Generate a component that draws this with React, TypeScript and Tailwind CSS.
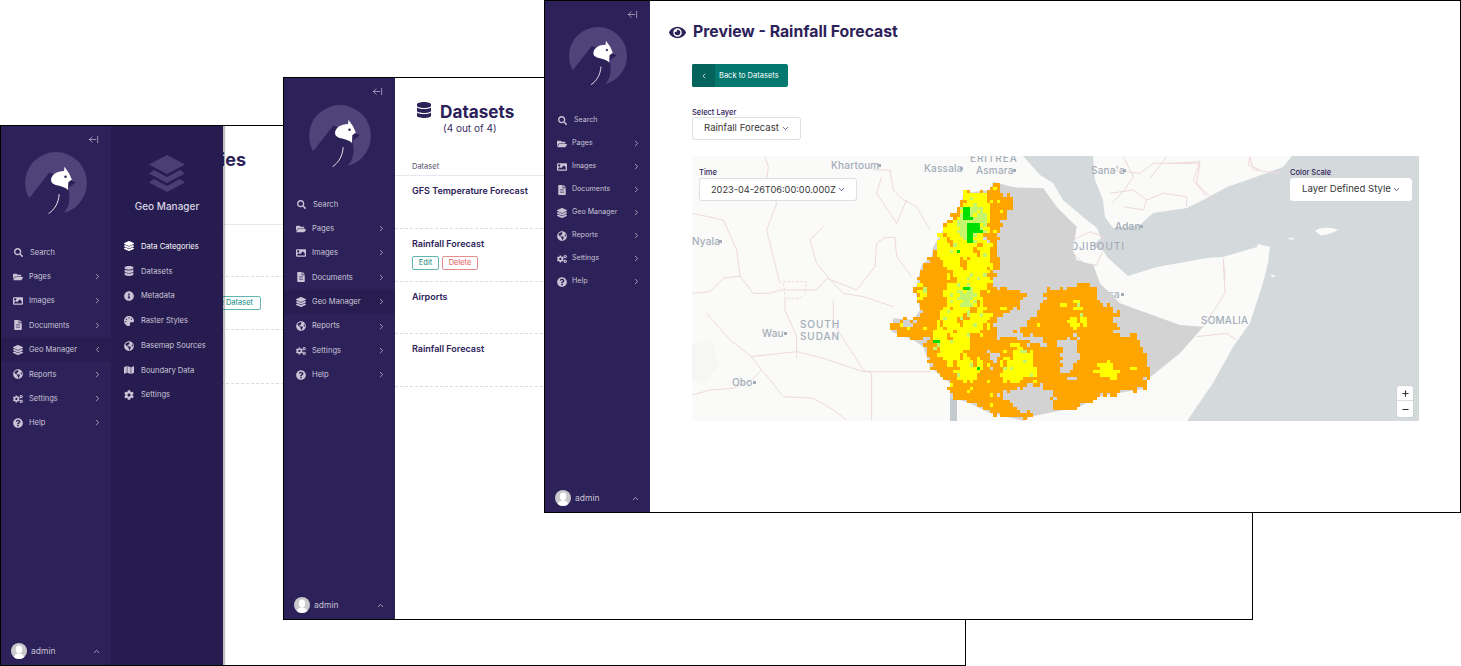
import React from 'react';
import { ArrowLeftFromLine, ChevronDown, ChevronLeft, ChevronRight, ChevronUp, Minus, Plus } from 'lucide-react';
import {
  FaCog,
  FaCogs,
  FaDatabase,
  FaEye,
  FaFileAlt,
  FaFolderOpen,
  FaGlobeAmericas,
  FaImage,
  FaInfoCircle,
  FaLayerGroup,
  FaMap,
  FaPalette,
  FaQuestionCircle,
  FaSearch,
} from 'react-icons/fa';

const navItems = [
  { label: 'Pages', icon: FaFolderOpen },
  { label: 'Images', icon: FaImage },
  { label: 'Documents', icon: FaFileAlt },
  { label: 'Geo Manager', icon: FaLayerGroup },
  { label: 'Reports', icon: FaGlobeAmericas },
  { label: 'Settings', icon: FaCogs },
  { label: 'Help', icon: FaQuestionCircle },
];

const geoItems = [
  { label: 'Data Categories', icon: FaLayerGroup },
  { label: 'Datasets', icon: FaDatabase },
  { label: 'Metadata', icon: FaInfoCircle },
  { label: 'Raster Styles', icon: FaPalette },
  { label: 'Basemap Sources', icon: FaGlobeAmericas },
  { label: 'Boundary Data', icon: FaMap },
  { label: 'Settings', icon: FaCog },
];

function Logo({ size }: { size: number }) {
  return (
    <svg width={size} height={size} viewBox="20 15 182 182">
      <circle cx="111" cy="106" r="88" fill="#50437a" />
      <path d="M34 150 L92 76 L168 104 L146 120 C153 150 150 176 128 196 L60 200 Z" fill="#2d2159" />
      <path d="M97 100 C96 82 114 72 134 72 L135 60 L148 78 L156 96 L146 104 L145 126 C132 110 100 116 97 100 Z" fill="#fff" />
      <circle cx="138" cy="88" r="3.5" fill="#2d2159" />
      <path d="M120 138 C118 165 106 182 90 193" stroke="#fff" strokeWidth="2.5" fill="none" />
    </svg>
  );
}

function Avatar() {
  return (
    <svg width="16" height="16" viewBox="0 0 16 16" className="rounded-full bg-[#c9c8cc] shrink-0">
      <ellipse cx="8" cy="6.5" rx="3.2" ry="4" fill="#fff" />
      <path d="M2.5 16 C3 11.5 5.5 10.5 8 10.5 C10.5 10.5 13 11.5 13.5 16 Z" fill="#fff" />
    </svg>
  );
}

function Sidebar({
  widthClass,
  logoSize,
  logoClass,
  rowClass,
  textClass,
  gapClass,
  active,
  open,
}: {
  widthClass: string;
  logoSize: number;
  logoClass: string;
  rowClass: string;
  textClass: string;
  gapClass: string;
  active?: boolean;
  open?: boolean;
}) {
  return (
    <aside className={`${widthClass} shrink-0 h-full bg-[#2d2159] flex flex-col text-[#c8c4d6]`}>
      <div className="flex justify-end pt-[8px] pr-[12px] h-[20px]">
        <ArrowLeftFromLine size={11} strokeWidth={1.5} />
      </div>
      <div className={`flex justify-center ${logoClass}`}>
        <Logo size={logoSize} />
      </div>
      <nav className={textClass}>
        <div className={`${rowClass} flex items-center pl-[13px]`}>
          <FaSearch size={9} />
          <span className="ml-[7px]">Search</span>
        </div>
        {navItems.map((item) => {
          const Icon = item.icon;
          const isGeo = item.label === 'Geo Manager';
          return (
            <div
              key={item.label}
              className={`${rowClass} flex items-center pl-[12px] pr-[9px] ${isGeo && active ? 'bg-[#281d51]' : ''}`}
            >
              <Icon size={10} className="shrink-0" />
              <span className={`${gapClass} flex-1 whitespace-nowrap`}>{item.label}</span>
              {isGeo && open ? <ChevronLeft size={9} /> : <ChevronRight size={9} />}
            </div>
          );
        })}
      </nav>
      <div className="mt-auto h-[28px] flex items-center pl-[10px] pr-[10px] text-[8.5px]">
        <Avatar />
        <span className="ml-[4px] flex-1">admin</span>
        <ChevronUp size={9} />
      </div>
    </aside>
  );
}

function GeoPanel() {
  return (
    <div className="absolute left-[110px] top-0 bottom-0 w-[112px] bg-[#271c50] shadow-[2px_0_1px_rgba(0,0,0,0.25)] text-[#c8c4d6] flex flex-col items-center">
      <svg width="38" height="38" viewBox="0 0 38 38" className="mt-[29px]" fill="#4b3e75">
        <path d="M19 0 L37 9.5 L19 19 L1 9.5 Z" />
        <path d="M6 15 L19 22 L32 15 L37 18.5 L19 28 L1 18.5 Z" />
        <path d="M6 24 L19 31 L32 24 L37 27.5 L19 37 L1 27.5 Z" />
      </svg>
      <div className="mt-[6px] text-[10px] font-medium text-[#d9d6e3]">Geo Manager</div>
      <div className="mt-[20px] w-full pl-[13px]">
        {geoItems.map((item, i) => {
          const Icon = item.icon;
          return (
            <div key={item.label} className={`h-[24.8px] flex items-center text-[7.6px] ${i === 0 ? 'text-white' : ''}`}>
              <Icon size={10} className="shrink-0" />
              <span className="ml-[7px] whitespace-nowrap">{item.label}</span>
            </div>
          );
        })}
      </div>
    </div>
  );
}

function CategoriesWindow() {
  return (
    <section className="absolute left-0 top-[125px] w-[966px] h-[541px] bg-white border border-black overflow-hidden flex">
      <Sidebar
        widthClass="w-[110px]"
        logoSize={64}
        logoClass="mt-[5px] mb-[25px]"
        rowClass="h-[24.4px]"
        textClass="text-[7.5px]"
        gapClass="ml-[6px]"
        active
        open
      />
      <div className="flex-1 text-[#2d2159]">
        <div className="w-[135px] h-[98px] pt-[22px] flex justify-end whitespace-nowrap text-[18px] leading-[24px] font-bold">
          Data Categories
        </div>
        <div className="border-t border-[#e8e8ec] h-[52px]" />
        <div className="border-t border-dashed border-[#dcdce0] h-[53px] flex items-center">
          <div className="ml-[50px] w-[100px] h-[14px] pr-[7px] border border-[#62b5b0] rounded-[2px] text-[#0f8a82] text-[7.5px] flex items-center justify-end whitespace-nowrap">
            Create Dataset
          </div>
        </div>
        <div className="border-t border-dashed border-[#dcdce0] h-[54px]" />
        <div className="border-t border-dashed border-[#dcdce0] h-[54px]" />
      </div>
      <GeoPanel />
    </section>
  );
}

const datasetRows = ['GFS Temperature Forecast', 'Rainfall Forecast', 'Airports', 'Rainfall Forecast'];

function DatasetsWindow() {
  return (
    <section className="absolute left-[283px] top-[77px] w-[970px] h-[543px] bg-white border border-black overflow-hidden flex">
      <Sidebar
        widthClass="w-[111px]"
        logoSize={64}
        logoClass="mt-[6px] mb-[24px]"
        rowClass="h-[24.4px]"
        textClass="text-[7.6px]"
        gapClass="ml-[6px]"
        active
      />
      <div className="flex-1 text-[#2d2159]">
        <div className="pl-[21px] pt-[23px] flex">
          <FaDatabase size={16} className="mt-[1px]" />
          <div className="ml-[8px] flex flex-col items-start">
            <h1 className="text-[17.2px] leading-[22px] font-bold">Datasets</h1>
            <div className="ml-[3px] text-[10px] leading-[11px] text-[#3a2f68]">(4 out of 4)</div>
          </div>
        </div>
        <div className="pl-[17px] mt-[25px] h-[16px] text-[7.5px] text-[#55506e] flex items-center border-b border-[#e8e8ec] box-content">
          Dataset
        </div>
        {datasetRows.map((name, i) => (
          <div key={i} className="h-[52.8px] pl-[17px] pt-[9px] border-b border-dashed border-[#dcdce0]">
            <div className="text-[9px] leading-[12px] font-semibold">{name}</div>
            {i === 1 && (
              <div className="mt-[6px] flex gap-[3px] text-[7.5px]">
                <div className="w-[27px] h-[14px] border border-[#62b5b0] rounded-[2px] text-[#17877f] flex items-center justify-center">
                  Edit
                </div>
                <div className="w-[36px] h-[14px] border border-[#e68d8d] rounded-[2px] text-[#e25c5c] flex items-center justify-center">
                  Delete
                </div>
              </div>
            )}
          </div>
        ))}
      </div>
    </section>
  );
}

// ----- map drawing -----

type Pt = [number, number];

const ethiopia: Pt[] = [
  [340, 95], [400, 112], [490, 115], [530, 170], [590, 230], [585, 265], [578, 300], [590, 330], [640, 345], [660, 400],
  [720, 460], [900, 525], [970, 530], [900, 610], [800, 690], [800, 715], [650, 740], [600, 770], [450, 800], [430, 812],
  [330, 790], [270, 760], [210, 740], [210, 700], [150, 650], [130, 590], [100, 570], [35, 545], [40, 505], [100, 510],
  [120, 480], [105, 420], [125, 345], [155, 320], [160, 290], [190, 240], [235, 200], [250, 130], [330, 120],
];

const orange: Pt[][] = [
  [
    [340, 95], [400, 150], [395, 175], [360, 220], [350, 300], [365, 350], [340, 410], [440, 425], [435, 450], [350, 510],
    [345, 570], [400, 550], [440, 520], [470, 490], [510, 420], [640, 400], [650, 440], [710, 490], [710, 550], [770, 550],
    [800, 640], [800, 715], [650, 740], [600, 770], [530, 780], [520, 730], [470, 700], [360, 735], [400, 770], [460, 790],
    [440, 812], [330, 790], [270, 760], [210, 740], [210, 700], [155, 655], [130, 590], [100, 570], [35, 545], [40, 505],
    [100, 510], [120, 480], [105, 420], [125, 345], [155, 320], [250, 130], [330, 120],
  ],
];

const holes: Pt[][] = [
  [[540, 570], [590, 555], [600, 620], [575, 650], [585, 700], [545, 660]],
  [[410, 548], [480, 560], [500, 590], [430, 575], [400, 590]],
  [[330, 610], [360, 605], [345, 650], [328, 650]],
  [[310, 270], [330, 265], [320, 310], [305, 315]],
  [[345, 400], [355, 365], [345, 350], [340, 400]],
  [[355, 740], [465, 705], [520, 735], [520, 775], [470, 775], [400, 760]],
  [[35, 510], [100, 512], [90, 530], [60, 525], [40, 530]],
  [[100, 570], [145, 560], [130, 590]],
];

const yellow: Pt[][] = [
  [
    [255, 130], [320, 125], [330, 205], [330, 230], [300, 290], [335, 275], [330, 330], [330, 400], [300, 460], [330, 490],
    [320, 530], [260, 560], [270, 620], [320, 640], [280, 700], [230, 680], [200, 640], [160, 590], [170, 510], [195, 470],
    [200, 400], [210, 370], [170, 310], [160, 290], [190, 240], [235, 200],
  ],
  [[350, 650], [400, 580], [460, 610], [465, 680], [400, 700], [360, 680]],
  [[560, 510], [610, 495], [630, 520], [600, 535], [570, 530]],
  [[545, 460], [562, 460], [562, 482], [545, 482]],
  [[580, 462], [600, 440], [610, 472], [590, 482]],
  [[640, 665], [680, 625], [710, 650], [715, 685], [680, 685], [650, 675]],
  [[112, 410], [135, 405], [140, 440], [120, 450]],
  [[745, 655], [765, 650], [765, 665], [745, 665]],
];

const lightGreen: Pt[][] = [
  [[245, 170], [300, 150], [320, 210], [290, 280], [240, 270], [235, 220]],
  [[235, 420], [280, 405], [290, 460], [240, 465]],
];

const green: Pt[][] = [
  [[248, 170], [270, 175], [276, 205], [250, 212]],
  [[265, 225], [300, 215], [306, 245], [282, 255], [276, 282], [258, 276]],
  [[254, 406], [266, 406], [266, 420], [254, 420]],
  [[165, 568], [177, 568], [177, 582], [165, 582]],
  [[290, 648], [302, 648], [302, 660], [290, 660]],
  [[232, 302], [245, 302], [245, 315], [232, 315]],
];

function inside(p: Pt, poly: Pt[]) {
  let hit = false;
  for (let i = 0, j = poly.length - 1; i < poly.length; j = i++) {
    const [xi, yi] = poly[i];
    const [xj, yj] = poly[j];
    if (yi > p[1] !== yj > p[1] && p[0] < ((xj - xi) * (p[1] - yi)) / (yj - yi) + xi) hit = !hit;
  }
  return hit;
}

function noise(x: number, y: number) {
  const s = Math.sin(x * 12.9898 + y * 78.233) * 43758.5453;
  return s - Math.floor(s);
}

// slow wobble so the orange breaks through the yellow in patches, not single cells
function patches(x: number, y: number) {
  return Math.sin(x * 0.09 + 1.3) * Math.sin(y * 0.07 + 0.4) + Math.sin((x + y) * 0.045) * 0.6 + Math.sin(x * 0.21 - y * 0.13) * 0.5;
}

const inAny = (p: Pt, polys: Pt[][]) => polys.some((poly) => inside(p, poly));

// rasterise the forecast into cells, one path for each colour
function buildRaster() {
  const paths = { orange: '', yellow: '', light: '', green: '' };
  const cell = 10;
  for (let y = 90; y < 820; y += cell) {
    for (let x = 30; x < 810; x += cell) {
      const jx = (noise(x, y) - 0.5) * 16;
      const jy = (noise(y, x + 7) - 0.5) * 16;
      const p: Pt = [x + 5 + jx, y + 5 + jy];
      const rect = `M${x} ${y}h${cell}v${cell}h-${cell}z`;
      const isOrange = inAny(p, orange) && !inAny(p, holes);
      const mottled = y > 240 && patches(x, y) > 0.85;
      if (inAny([x + 5, y + 5], green)) paths.green += rect;
      else if (inAny(p, lightGreen) && noise(x + 3, y) > 0.2) paths.light += rect;
      else if (inAny(p, yellow) && !mottled) {
        if (noise(x, y + 11) > 0.94) paths.light += rect;
        else paths.yellow += rect;
      } else if (isOrange) {
        if (noise(x + 5, y + 5) > 0.975 && x < 480) paths.yellow += rect;
        else paths.orange += rect;
      }
    }
  }
  return paths;
}

const raster = buildRaster();

const sea =
  '1023,156 1040,175 1053,183 1063,200 1083,217 1097,228 1101,238 1092,246 1103,250 1107,257 1128,276 1157,267 1207,258 1223,257 1257,247 1258,244 1270,247 1268,263 1263,283 1250,323 1233,347 1213,383 1187,421 1419,421 1419,156 1292,156 1283,167 1253,178 1227,187 1203,200 1187,208 1153,213 1140,225 1113,228 1105,217 1103,200 1095,180 1093,156';

const westBorders = [
  '8,430 60,425 100,385 150,378 190,430 240,430 270,420 380,420 410,385 500,420 555,350 560,280 585,262 615,262 620,320 665,380',
  '50,490 120,570 185,620 215,660 240,690 280,740 370,745 430,780 470,810',
  '8,735 60,720 130,715 185,690 215,660',
  '180,620 320,605 400,625 520,665 720,665',
  '285,445 285,480 320,560 320,625',
  '400,230 360,270 380,340 430,400 460,430 520,440 610,470',
  '8,190 100,210 140,300 150,378',
  '225,20 235,50 230,90 260,160 230,240 270,400',
  '550,60 600,60 610,120 640,150 680,170 720,240',
  '430,450 430,520 520,660 545,670 545,810',
  '575,80 560,130 620,220 650,150',
];

const yemenBorders = [
  '210,60 300,70 340,40 480,40 470,100 520,150',
  '210,130 280,120 320,150 370,130 440,140 440,170',
  '215,160 250,125 280,80 250,20',
  '250,170 310,180 320,150',
  '630,20 640,60 720,70',
  '330,85 380,20',
  '100,270 150,245 190,260 190,300 170,345',
  '100,310 130,340 170,345',
  '550,330 555,390',
];

const eastBorders = [
  '0,40 90,35 70,90 110,140',
  '240,20 235,45 270,60',
  '160,325 165,430 100,530',
  '80,560 170,550 200,570',
];

function PlaceLabel({ x, y, text, anchor, wide }: { x: number; y: number; text: string; anchor?: 'end'; wide?: boolean }) {
  return (
    <text x={x} y={y} textAnchor={anchor} fontSize="10" fontWeight="500" fill="#a3adb8" letterSpacing={wide ? 0.9 : 0.2}>
      {text}
    </text>
  );
}

function MapArt() {
  return (
    <svg viewBox="692 156 727 265" width="727" height="265" className="block font-['Inter',sans-serif]">
      <rect x="692" y="156" width="727" height="265" fill="#fafaf8" />
      <polygon points={sea} fill="#d4dadc" />
      <path d="M1315 231 C1320 227 1332 227 1338 230 C1332 233 1325 236 1320 235 Z" fill="#fafaf8" />
      <path d="M1289 238 l5 1 l-5 0 Z M1271 275 l4 1 l-2 1 Z" fill="#fafaf8" stroke="#fafaf8" />
      <path d="M692 345 L712 340 L718 365 L705 385 L692 380 Z" fill="#f6f7f5" />
      <g transform="translate(690 150) scale(0.3333)" fill="none" stroke="#eed8db" strokeWidth="3">
        {westBorders.map((pts, i) => (
          <polyline key={i} points={pts} />
        ))}
        <polyline points="280,395 350,395 345,430 330,445 285,445 280,395" strokeDasharray="8 5" />
      </g>
      <g transform="translate(1040 150) scale(0.3333)" fill="none" stroke="#eed8db" strokeWidth="3">
        {yemenBorders.map((pts, i) => (
          <polyline key={i} points={pts} />
        ))}
      </g>
      <g transform="translate(1170 150) scale(0.3333)" fill="none" stroke="#eed8db" strokeWidth="3">
        {eastBorders.map((pts, i) => (
          <polyline key={i} points={pts} />
        ))}
      </g>
      <PlaceLabel x={831} y={169} text="Khartoum" />
      <PlaceLabel x={924} y={172} text="Kassala" />
      <PlaceLabel x={976} y={174} text="Asmara" />
      <PlaceLabel x={970} y={162} text="ERITREA" wide />
      <PlaceLabel x={1091} y={174} text="Sana'a" />
      <PlaceLabel x={1115} y={230} text="Adan" />
      <PlaceLabel x={1071} y={250} text="DJIBOUTI" wide />
      <PlaceLabel x={1120} y={298} text="Hargeisa" anchor="end" />
      <PlaceLabel x={692} y={245} text="Nyala" />
      <PlaceLabel x={762} y={337} text="Wau" />
      <PlaceLabel x={732} y={386} text="Obo" />
      <PlaceLabel x={800} y={328} text="SOUTH" wide />
      <PlaceLabel x={800} y={340} text="SUDAN" wide />
      <PlaceLabel x={1201} y={324} text="SOMALIA" />
      <g fill="#a3adb8">
        <rect x="878" y="164" width="3" height="3" />
        <rect x="960" y="167" width="3" height="3" />
        <rect x="1013" y="169" width="3" height="3" />
        <rect x="1123" y="169" width="3" height="3" />
        <rect x="1140" y="225" width="3" height="3" />
        <rect x="1121" y="293" width="3" height="3" />
        <rect x="719" y="240" width="3" height="3" />
        <rect x="784" y="332" width="3" height="3" />
        <rect x="753" y="381" width="3" height="3" />
      </g>
      <polygon points="950,397 957,400 957,421 950,421" fill="#c3cbcf" />
      <g transform="translate(880 150) scale(0.3333)">
        <polygon points={ethiopia.map((p) => p.join(',')).join(' ')} fill="#d3d3d3" />
        <g shapeRendering="crispEdges">
          <path d={raster.orange} fill="#ffa500" />
          <path d={raster.yellow} fill="#ffff00" />
          <path d={raster.light} fill="#c4f56a" />
          <path d={raster.green} fill="#00e000" />
        </g>
      </g>
    </svg>
  );
}

function SelectBox({ text, className }: { text: string; className: string }) {
  return (
    <div className={`h-[23px] bg-white border border-[#dedee3] rounded-[3px] flex items-center justify-between text-[#363636] whitespace-nowrap ${className}`}>
      <span>{text}</span>
      <ChevronDown size={9} className="text-[#2d2159]" />
    </div>
  );
}

function PreviewWindow() {
  return (
    <section className="absolute left-[544px] top-0 w-[917px] h-[513px] bg-white border border-black overflow-hidden flex">
      <Sidebar
        widthClass="w-[105px]"
        logoSize={60}
        logoClass="mt-[5px] mb-[23px]"
        rowClass="h-[23px]"
        textClass="text-[7.1px]"
        gapClass="ml-[5px]"
      />
      <div className="flex-1 text-[#2d2159]">
        <div className="pl-[19px] pt-[20px] flex items-center">
          <FaEye size={17} />
          <h1 className="ml-[7px] text-[15.8px] leading-[22px] font-bold whitespace-nowrap">Preview - Rainfall Forecast</h1>
        </div>
        <div className="pl-[42px]">
          <button className="mt-[21px] w-[96px] h-[23px] bg-[#04786f] rounded-[2px] flex items-center text-white text-[7.5px] overflow-hidden">
            <span className="w-[23px] h-full bg-[#05635e] flex items-center justify-center">
              <ChevronLeft size={8} />
            </span>
            <span className="ml-[4px] whitespace-nowrap">Back to Datasets</span>
          </button>
          <div className="mt-[21px] text-[7.5px] leading-[9px] font-medium">Select Layer</div>
          <SelectBox text="Rainfall Forecast" className="w-[109px] pl-[11px] pr-[10px] text-[9.6px]" />
          <div className="relative mt-[16px] w-[727px] h-[265px] overflow-hidden">
            <MapArt />
            <div className="absolute left-[7px] top-[12px]">
              <div className="text-[7.5px] leading-[10px] font-medium">Time</div>
              <SelectBox text="2023-04-26T06:00:00.000Z" className="w-[158px] pl-[11px] pr-[10px] text-[9.2px]" />
            </div>
            <div className="absolute left-[598px] top-[12px]">
              <div className="text-[7.5px] leading-[10px] font-medium">Color Scale</div>
              <SelectBox text="Layer Defined Style" className="w-[122px] pl-[11px] pr-[10px] border-white text-[9.6px]" />
            </div>
            <div className="absolute left-[705px] top-[230px] w-[16px] h-[31px] bg-white rounded-[2px] flex flex-col text-[#333] shadow-[0_0_1px_rgba(0,0,0,0.3)]">
              <div className="h-[15px] flex items-center justify-center border-b border-[#ddd]">
                <Plus size={9} strokeWidth={3} />
              </div>
              <div className="h-[16px] flex items-center justify-center">
                <Minus size={9} strokeWidth={3} />
              </div>
            </div>
          </div>
        </div>
      </div>
    </section>
  );
}

export default function App() {
  return (
    <div className="relative w-[1461px] h-[666px] bg-white overflow-hidden font-['Inter',sans-serif]">
      <CategoriesWindow />
      <DatasetsWindow />
      <PreviewWindow />
    </div>
  );
}
